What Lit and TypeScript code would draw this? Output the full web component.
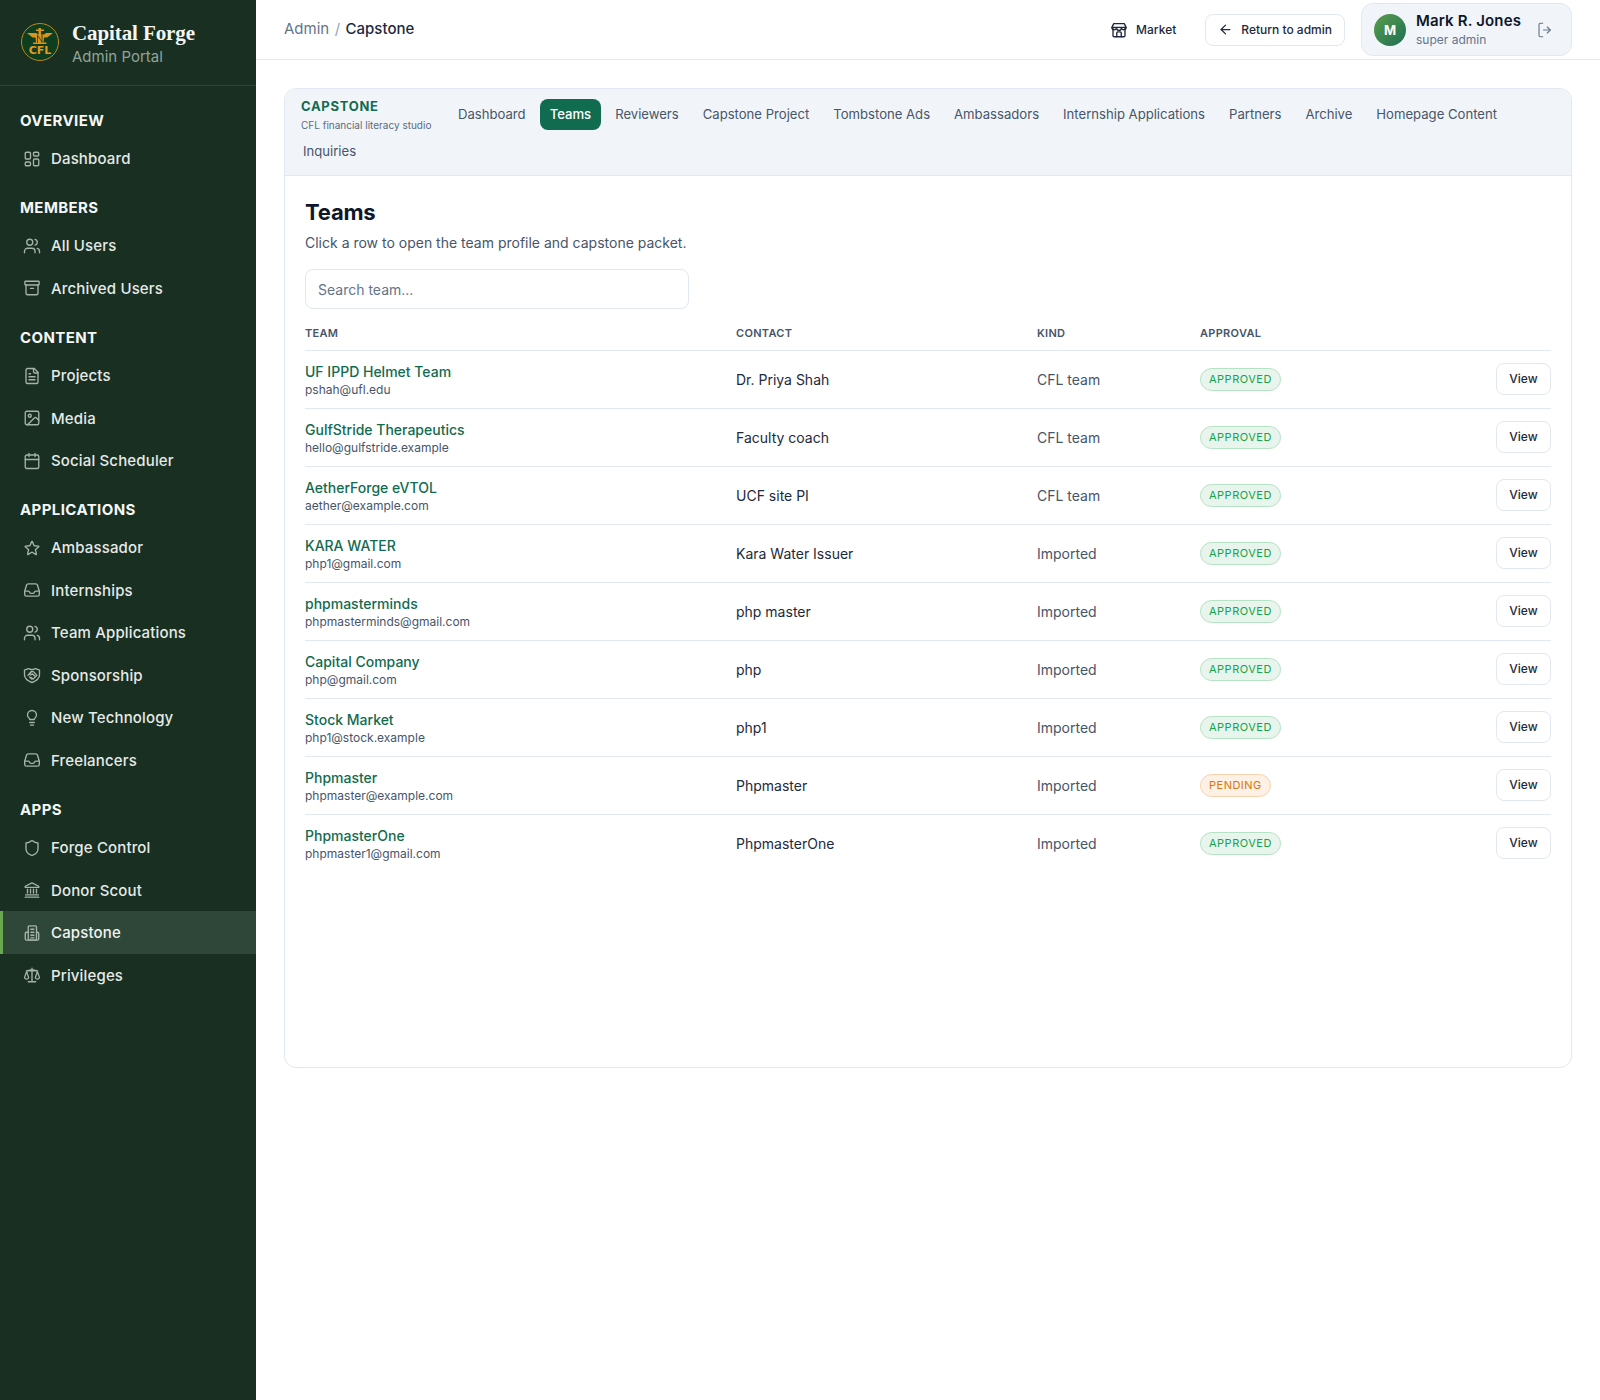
import { LitElement, html, css, svg } from "lit";
import { customElement } from "lit/decorators.js";

const ICONS: Record<string, any> = {
  dashboard: svg`<rect x="3" y="3" width="7" height="9" rx="1.5"/><rect x="14" y="3" width="7" height="5" rx="1.5"/><rect x="14" y="12" width="7" height="9" rx="1.5"/><rect x="3" y="16" width="7" height="5" rx="1.5"/>`,
  users: svg`<path d="M16 21v-2a4 4 0 0 0-4-4H6a4 4 0 0 0-4 4v2"/><circle cx="9" cy="7" r="4"/><path d="M22 21v-2a4 4 0 0 0-3-3.87"/><path d="M16 3.13a4 4 0 0 1 0 7.75"/>`,
  archive: svg`<rect x="2.5" y="3" width="19" height="5" rx="1"/><path d="M4 8v11a2 2 0 0 0 2 2h12a2 2 0 0 0 2-2V8"/><path d="M10 12.5h4"/>`,
  file: svg`<path d="M15 2H6a2 2 0 0 0-2 2v16a2 2 0 0 0 2 2h12a2 2 0 0 0 2-2V7z"/><path d="M14 2v4a2 2 0 0 0 2 2h4"/><path d="M8 13h8M8 17h8M8 9h2"/>`,
  image: svg`<rect x="3" y="3" width="18" height="18" rx="2"/><circle cx="9" cy="9" r="2"/><path d="m21 15-3.09-3.09a2 2 0 0 0-2.82 0L6 21"/>`,
  calendar: svg`<path d="M8 2v4M16 2v4"/><rect x="3" y="4" width="18" height="18" rx="2"/><path d="M3 10h18"/>`,
  star: svg`<path d="M11.48 3.5a.56.56 0 0 1 1.04 0l2.13 5.11a.56.56 0 0 0 .48.35l5.52.44c.5.04.7.66.32.99l-4.2 3.6a.56.56 0 0 0-.19.56l1.29 5.38a.56.56 0 0 1-.84.61l-4.73-2.89a.56.56 0 0 0-.59 0l-4.73 2.89a.56.56 0 0 1-.84-.61l1.29-5.38a.56.56 0 0 0-.18-.56l-4.2-3.6a.56.56 0 0 1 .32-.99l5.52-.44a.56.56 0 0 0 .47-.35z"/>`,
  inbox: svg`<path d="M2.25 13.5h4.4a2.25 2.25 0 0 1 2.02 1.24l.26.52a2.25 2.25 0 0 0 2.01 1.24h2.13a2.25 2.25 0 0 0 2.01-1.24l.26-.52a2.25 2.25 0 0 1 2.01-1.24h4.4"/><path d="M2.25 13.9V18a2.25 2.25 0 0 0 2.25 2.25h15A2.25 2.25 0 0 0 21.75 18v-4.1c0-.22-.03-.44-.1-.66l-2.4-7.85a2.25 2.25 0 0 0-2.16-1.6H6.9a2.25 2.25 0 0 0-2.15 1.6l-2.4 7.85c-.07.22-.1.44-.1.66z"/>`,
  handshake: svg`<path d="M2 5.500 7 3.500l5 1.500 5-1.500 5 2v6.500c0 5-5 8-10 10-5-2-10-5-10-10z"/><path d="m6.500 12.500 4.500-5h3l4.500 5-5 5-3-2.500"/><path d="m11 7.500-2.500 3.500 1.500 1 2.500-1.500 4 3.500"/><path d="m8.500 14.500 3 3"/>`,
  bulb: svg`<path d="M9 18h6M10 21.5h4"/><path d="M15 14c.2-1 .7-1.7 1.5-2.5A6 6 0 0 0 18 8 6 6 0 0 0 6 8c0 1 .2 2.2 1.500 3.500.7.7 1.300 1.500 1.500 2.500z"/>`,
  shield: svg`<path d="M20 13c0 5-3.500 7.500-7.660 8.950a1 1 0 0 1-.67-.01C7.500 20.500 4 18 4 13V6a1 1 0 0 1 1-1c2 0 4.500-1.200 6.240-2.720a1.170 1.170 0 0 1 1.520 0C14.510 3.810 17 5 19 5a1 1 0 0 1 1 1z"/>`,
  bank: svg`<path d="M12 2.500 21 7v1.500H3V7z"/><path d="M3 21.500h18M3.500 18.500h17M6 11v5M10 11v5M14 11v5M18 11v5"/>`,
  building: svg`<rect x="7" y="2.500" width="11" height="19" rx="1.500"/><path d="M7 11H4.500A1.500 1.500 0 0 0 3 12.500v7.500A1.500 1.500 0 0 0 4.500 21.500h15A1.500 1.500 0 0 0 21 20v-7.500a1.500 1.500 0 0 0-1.500-1.500H18"/><path d="M10.500 7h4M10.500 11h4M10.500 15h4M10.500 18.500h4"/>`,
  scale: svg`<path d="M12 3v17M7 21h10M4.500 6.500h15M12 5l-7.500 1.500M12 5l7.500 1.500"/><path d="M2 15.500 4.800 7.500l2.800 8a3 3 0 0 1-5.600 0z"/><path d="M16.400 15.500l2.800-8 2.800 8a3 3 0 0 1-5.600 0z"/>`,
  store: svg`<path d="M4 10v9.500A1.500 1.500 0 0 0 5.500 21h13a1.500 1.500 0 0 0 1.500-1.500V10"/><path d="M5 3.500h14l2.500 5a3.200 3.200 0 0 1-6.300.7 3.200 3.200 0 0 1-6.400 0 3.200 3.200 0 0 1-6.300-.7z"/><path d="M3 8.500h18"/><path d="M9 21v-5a1.500 1.500 0 0 1 1.500-1.500h3A1.500 1.500 0 0 1 15 16v5"/>`,
  arrow: svg`<path d="m12 19-7-7 7-7"/><path d="M19 12H5"/>`,
  logout: svg`<path d="M9 21H6a2 2 0 0 1-2-2V5a2 2 0 0 1 2-2h3"/><path d="m15 16 4-4-4-4"/><path d="M19 12H10"/>`,
};

const icon = (n: string, cls = "") =>
  html`<svg class="ic ${cls}" viewBox="0 0 24 24" fill="none" stroke="currentColor" stroke-width="1.800" stroke-linecap="round" stroke-linejoin="round" aria-hidden="true">${ICONS[n]}</svg>`;

const NAV = [
  { title: "OVERVIEW", items: [["Dashboard", "dashboard"]] },
  { title: "MEMBERS", items: [["All Users", "users"], ["Archived Users", "archive"]] },
  { title: "CONTENT", items: [["Projects", "file"], ["Media", "image"], ["Social Scheduler", "calendar"]] },
  {
    title: "APPLICATIONS",
    items: [["Ambassador", "star"], ["Internships", "inbox"], ["Team Applications", "users"], ["Sponsorship", "handshake"], ["New Technology", "bulb"], ["Freelancers", "inbox"]],
  },
  { title: "APPS", items: [["Forge Control", "shield"], ["Donor Scout", "bank"], ["Capstone", "building"], ["Privileges", "scale"]] },
];

const TABS = ["Dashboard", "Teams", "Reviewers", "Capstone Project", "Tombstone Ads", "Ambassadors", "Internship Applications", "Partners", "Archive", "Homepage Content", "Inquiries"];

const ROWS = [
  ["UF IPPD Helmet Team", "pshah@ufl.edu", "Dr. Priya Shah", "CFL team", "APPROVED"],
  ["GulfStride Therapeutics", "hello@gulfstride.example", "Faculty coach", "CFL team", "APPROVED"],
  ["AetherForge eVTOL", "aether@example.com", "UCF site PI", "CFL team", "APPROVED"],
  ["KARA WATER", "php1@gmail.com", "Kara Water Issuer", "Imported", "APPROVED"],
  ["phpmasterminds", "phpmasterminds@gmail.com", "php master", "Imported", "APPROVED"],
  ["Capital Company", "php@gmail.com", "php", "Imported", "APPROVED"],
  ["Stock Market", "php1@stock.example", "php1", "Imported", "APPROVED"],
  ["Phpmaster", "phpmaster@example.com", "Phpmaster", "Imported", "PENDING"],
  ["PhpmasterOne", "phpmaster1@gmail.com", "PhpmasterOne", "Imported", "APPROVED"],
];

@customElement("app-root")
export class AppRoot extends LitElement {
  static styles = css`
    :host { display: block; font-family: Inter, "Liberation Sans", sans-serif; color: #0f172a; }
    * { box-sizing: border-box; }
    .shell { display: flex; min-height: 1400px; background: #fff; }
    .side { width: 256px; flex: none; background: #182f22; color: #fff; }
    .brand { height: 86px; display: flex; align-items: center; gap: 12px; padding: 0 20px; border-bottom: 1px solid #2e4537; }
    .logo { width: 40px; height: 40px; flex: none; display: block; margin-bottom: 2px; }
    .brand-text { padding-top: 2px; }
    .brand-name { font-family: "Liberation Serif", serif; font-weight: 700; font-size: 21px; line-height: 26px; letter-spacing: -0.1px; color: #f4f6f4; }
    .brand-sub { font-size: 15px; line-height: 20px; color: #8fa597; margin-top: 1px; }
    .nav { padding-top: 13px; }
    .sec { margin-bottom: 6.2px; }
    .sec-title { font-size: 15px; font-weight: 700; letter-spacing: 0.4px; line-height: 24px; padding: 10px 20px 4px; color: #f6f7f6; height: 38.5px; }
    .item { display: flex; align-items: center; gap: 10px; height: 42.5px; padding-left: 23px; font-size: 15px; font-weight: 500; color: #e6eae7; letter-spacing: 0.15px; }
    .item .ic { width: 18px; height: 18px; color: #a5b3a9; flex: none; }
    .item.on { background: #2f4738; box-shadow: inset 3px 0 0 #6aa84f; color: #f0f3f1; }
    .main { flex: 1; min-width: 0; display: flex; flex-direction: column; }
    .top { height: 60px; border-bottom: 1px solid #e2e8f0; display: flex; align-items: center; padding: 0 28px; }
    .crumb { display: flex; gap: 5.5px; font-size: 15px; color: #64748b; flex: 1; margin-bottom: 2px; }
    .crumb .sep { color: #94a3b8; }
    .crumb b { font-weight: 500; color: #1e293b; }
    .market { display: flex; align-items: center; gap: 8px; font-size: 12px; font-weight: 500; color: #1e293b; margin-right: 29px; }
    .market .ic { width: 18px; height: 18px; }
    .ret { display: flex; align-items: center; gap: 8px; height: 32px; padding: 0 12px; border: 1px solid #e2e8f0; border-radius: 8px; font-size: 12px; font-weight: 500; color: #1e293b; margin-right: 16px; }
    .ret .ic { width: 15px; height: 15px; stroke-width: 2; }
    .user { display: flex; align-items: center; width: 211px; height: 53px; padding: 0 12px; background: #f1f5f9; border: 1px solid #e2e8f0; border-radius: 12px; }
    .avatar { width: 32px; height: 32px; border-radius: 50%; background: linear-gradient(135deg, #5a9e4a, #1f6e55); color: #fff; font-size: 13px; font-weight: 700; display: flex; align-items: center; justify-content: center; flex: none; margin-right: 10px; }
    .uname { font-size: 15px; font-weight: 600; line-height: 20px; letter-spacing: 0.15px; color: #0f172a; }
    .urole { font-size: 12px; line-height: 16px; color: #64748b; margin-top: 1px; }
    .user .ic { width: 18px; height: 18px; color: #64748b; margin-left: auto; margin-right: 5px; stroke-width: 1.5; }
    .content { padding: 28px 28px 0; }
    .card { height: 980px; border: 1px solid #e2e8f0; border-radius: 12px; overflow: hidden; }
    .tabsbar { background: #f1f5f9; border-bottom: 1px solid #e2e8f0; height: 87px; padding: 10px 16px 0; display: flex; flex-wrap: wrap; align-content: flex-start; column-gap: 4px; row-gap: 6px; }
    .tb-brand { width: 143px; height: 30.8px; }
    .tb-name { font-size: 13px; font-weight: 700; letter-spacing: 0.7px; line-height: 15px; color: #116b4f; }
    .tb-sub { font-size: 10px; line-height: 14px; color: #5b6b7e; margin-top: 4px; white-space: nowrap; }
    .tab { height: 30.8px; padding: 0 10px; border-radius: 8px; font-size: 13.12px; font-weight: 400; color: #475569; display: flex; align-items: center; white-space: nowrap; }
    .tab.on { background: #116b4f; color: #fff; font-weight: 500; }
    .tab.wrap { margin-left: -8px; }
    .body { padding: 20px; }
    h1 { margin: 0; font-size: 22px; line-height: 32px; font-weight: 700; letter-spacing: -0.2px; color: #0f172a; }
    .desc { margin: 5px 0 0; font-size: 14px; line-height: 20px; color: #475569; }
    .search { display: block; width: 384px; height: 40px; margin-top: 16px; padding: 0 12px; border: 1px solid #e2e8f0; border-radius: 8px; font: 400 14px Inter, sans-serif; line-height: 40px; color: #64748b; }
    .head, .row { display: grid; grid-template-columns: 431px 301px 163px 1fr auto; align-items: center; }
    .head { height: 36px; margin-top: 6px; font-size: 11px; font-weight: 600; color: #475569; letter-spacing: 0.3px; border-bottom: 1px solid #e2e8f0; }
    .row { height: 58px; border-bottom: 1px solid #e2e8f0; font-size: 14px; color: #1e293b; }
    .row:last-child { border-bottom-color: transparent; }
    .who { padding-top: 2px; }
    .nm { font-size: 14px; line-height: 18px; font-weight: 500; color: #116b4f; }
    .em { font-size: 12px; line-height: 16px; color: #475569; margin-top: 1px; }
    .kind { color: #475569; }
    .cell { display: flex; }
    .pill { display: inline-flex; align-items: center; height: 23px; padding: 0 8px 1px; border-radius: 999px; font-size: 11px; font-weight: 400; letter-spacing: 0.5px; border: 1px solid; }
    .pill.APPROVED { background: #e7f5ec; border-color: #b5e2c4; color: #16a34a; }
    .pill.PENDING { background: #fdf0e4; border-color: #f6d3ac; color: #d97706; }
    .view { width: 55px; height: 32px; margin-bottom: 1px; padding-bottom: 1px; display: flex; align-items: center; justify-content: center; border: 1px solid #e2e8f0; border-radius: 8px; font-size: 12px; font-weight: 500; color: #1e293b; }
  `;

  render() {
    return html`<div class="shell">
      <aside class="side">
        <div class="brand">
          <svg class="logo" viewBox="0 0 40 40" aria-hidden="true">
            <circle cx="20" cy="20" r="18.500" fill="#0f3d1f" stroke="#b88a1e" stroke-width="1"/>
            <g fill="#d9951f">
              <path d="M7 11h9l2 1.500h6l2-1.500h7l-6 4.500h-3l-.5 5h3v1.500H13v-1.500h3l-.5-5h-3z"/>
              <rect x="18.500" y="6" width="2.500" height="8"/><rect x="16" y="7.500" width="8" height="1.500"/>
            </g>
            <path d="M17.500 13v8M22 13v8M18 14l4 6" stroke="#0f3d1f" stroke-width=".8" fill="none"/>
            <text x="20" y="31.500" text-anchor="middle" font-family="DejaVu Sans, sans-serif" font-weight="700" font-size="11" fill="#e39a1f">CFL</text>
          </svg>
          <div class="brand-text"><div class="brand-name">Capital Forge</div><div class="brand-sub">Admin Portal</div></div>
        </div>
        <nav class="nav">
          ${NAV.map((s) => html`<div class="sec"><div class="sec-title">${s.title}</div>
            ${s.items.map(([t, i]) => html`<div class="item ${t === "Capstone" ? "on" : ""}">${icon(i)}<span>${t}</span></div>`)}</div>`)}
        </nav>
      </aside>
      <div class="main">
        <header class="top">
          <div class="crumb"><span>Admin</span><span class="sep">/</span><b>Capstone</b></div>
          <div class="market">${icon("store")}<span>Market</span></div>
          <div class="ret">${icon("arrow")}<span>Return to admin</span></div>
          <div class="user"><div class="avatar">M</div><div><div class="uname">Mark R. Jones</div><div class="urole">super admin</div></div>${icon("logout")}</div>
        </header>
        <div class="content">
          <section class="card">
            <div class="tabsbar">
              <div class="tb-brand"><div class="tb-name">CAPSTONE</div><div class="tb-sub">CFL financial literacy studio</div></div>
              ${TABS.map((t) => html`<div class="tab ${t === "Teams" ? "on" : ""} ${t === "Inquiries" ? "wrap" : ""}">${t}</div>`)}
            </div>
            <div class="body">
              <h1>Teams</h1>
              <p class="desc">Click a row to open the team profile and capstone packet.</p>
              <div class="search">Search team...</div>
              <div class="head"><span>TEAM</span><span>CONTACT</span><span>KIND</span><span>APPROVAL</span><span></span></div>
              ${ROWS.map((r) => html`<div class="row">
                <div class="who"><div class="nm">${r[0]}</div><div class="em">${r[1]}</div></div>
                <div>${r[2]}</div><div class="kind">${r[3]}</div>
                <div class="cell"><span class="pill ${r[4]}">${r[4]}</span></div>
                <div class="view">View</div>
              </div>`)}
            </div>
          </section>
        </div>
      </div>
    </div>`;
  }
}
